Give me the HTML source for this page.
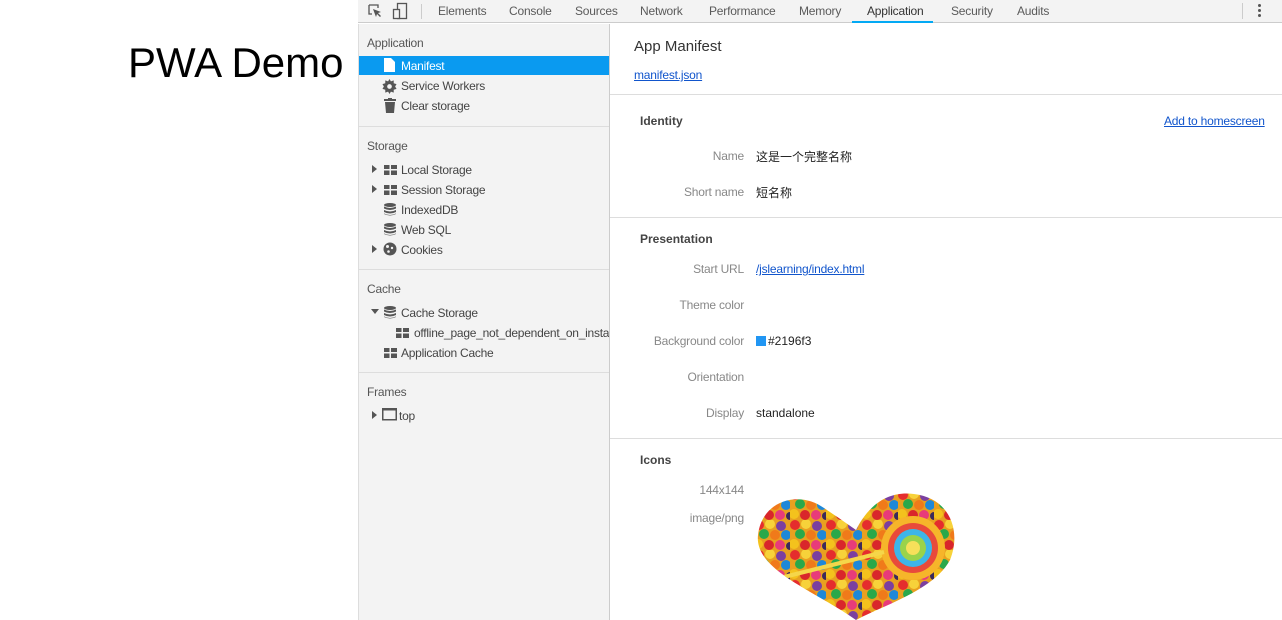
<!DOCTYPE html>
<html><head><meta charset="utf-8"><style>
*{margin:0;padding:0;box-sizing:border-box}
body{width:1282px;height:620px;overflow:hidden;background:#fff;font-family:"Liberation Sans","Noto Sans CJK SC",sans-serif;font-size:12px;color:#333;position:relative}
.a{position:absolute;white-space:nowrap}
.tb{position:absolute;left:358px;top:0;width:924px;height:23px;background:#f3f3f3;border-bottom:1px solid #ccc}
.tab{position:absolute;top:4px;color:#5a5a5a;font-size:12px;letter-spacing:-0.2px}
.side{position:absolute;left:358px;top:24px;width:252px;height:596px;background:#f3f3f3;border-right:1px solid #ccc;border-left:1px solid #ddd;overflow:hidden}
.sh{position:absolute;left:8px;color:#555;font-size:12px;letter-spacing:-0.2px}
.it{position:absolute;left:42px;color:#444;font-size:12px;letter-spacing:-0.25px;white-space:nowrap}
.hr{position:absolute;height:1px;background:#ddd}
.lab{position:absolute;right:538px;color:#888;font-size:12px;text-align:right;letter-spacing:-0.2px}
.val{position:absolute;left:756px;color:#222;font-size:12px}
.hd{position:absolute;left:640px;font-weight:bold;color:#444;font-size:12px}
a{color:#1155cc;text-decoration:underline}
.ic{position:absolute;left:25px}
.tri{position:absolute;left:13px;width:0;height:0;border-top:4px solid transparent;border-bottom:4px solid transparent;border-left:5px solid #555}
</style></head><body>
<div class="a" style="left:128px;top:39px;font-size:42px;color:#000">PWA Demo</div>

<div class="tb">
<svg class="a" style="left:9px;top:3px" width="16" height="16" viewBox="0 0 16 16"><path d="M2 2h9v3M2 2v9h3" fill="none" stroke="#555" stroke-width="1.3"/><path d="M6 6l8 3-3 1 3 3-1 1-3-3-1 3z" fill="#555"/></svg>
<svg class="a" style="left:34px;top:2px" width="16" height="18" viewBox="0 0 16 18"><rect x="5.5" y="1.5" width="9" height="15" fill="none" stroke="#555" stroke-width="1.3"/><rect x="1.5" y="7.5" width="6" height="9" fill="#f3f3f3" stroke="#555" stroke-width="1.3"/></svg>
<div class="a" style="left:63px;top:4px;width:1px;height:15px;background:#ccc"></div>
<div class="tab" style="left:80px">Elements</div>
<div class="tab" style="left:151px">Console</div>
<div class="tab" style="left:217px">Sources</div>
<div class="tab" style="left:282px">Network</div>
<div class="tab" style="left:351px">Performance</div>
<div class="tab" style="left:441px">Memory</div>
<div class="tab" style="left:509px;color:#333">Application</div>
<div class="a" style="left:494px;top:21px;width:81px;height:2px;background:#03a9f4"></div>
<div class="tab" style="left:593px">Security</div>
<div class="tab" style="left:659px">Audits</div>
<div class="a" style="left:884px;top:3px;width:1px;height:16px;background:#ccc"></div>
<div class="a" style="left:900px;top:4px;width:3px;height:3px;background:#555;border-radius:2px;box-shadow:0 5px 0 #555,0 10px 0 #555"></div>
</div>

<div class="side">
<div class="sh" style="top:12px">Application</div>
<div class="a" style="left:0;top:32px;width:251px;height:19px;background:#0a9af0"></div>
<svg class="ic" style="top:34px" width="11" height="14" viewBox="0 0 11 14"><path d="M0 0h7l4 4v10H0z" fill="#fff"/></svg>
<div class="it" style="top:35px;color:#fff">Manifest</div>
<svg class="ic" style="top:55px;left:23px" width="15" height="15" viewBox="0 0 16 16"><path d="M8 0l1.5 2.5 3-1 0 3 3 1-1.5 2.5 1.5 2.5-3 1 0 3-3-1L8 16l-1.5-2.5-3 1 0-3-3-1L2 8 .5 5.5l3-1 0-3 3 1z" fill="#555"/><circle cx="8" cy="8" r="2.5" fill="#f3f3f3"/></svg>
<div class="it" style="top:55px">Service Workers</div>
<svg class="ic" style="top:74px" width="12" height="15" viewBox="0 0 12 15"><rect x="0" y="1" width="12" height="2" fill="#555"/><rect x="4" y="0" width="4" height="2" fill="#555"/><path d="M1 4h10l-1 11H2z" fill="#555"/></svg>
<div class="it" style="top:75px">Clear storage</div>
<div class="hr" style="left:0;top:102px;width:251px"></div>

<div class="sh" style="top:115px">Storage</div>
<div class="tri" style="top:141px"></div>
<svg class="ic" style="top:141px" width="13" height="10"><path d="M0 0h5.5v4H0zM7 0h6v4H7zM0 5.5h5.5V10H0zM7 5.5h6V10H7z" fill="#555"/></svg>
<div class="it" style="top:139px">Local Storage</div>
<div class="tri" style="top:161px"></div>
<svg class="ic" style="top:161px" width="13" height="10"><path d="M0 0h5.5v4H0zM7 0h6v4H7zM0 5.5h5.5V10H0zM7 5.5h6V10H7z" fill="#555"/></svg>
<div class="it" style="top:159px">Session Storage</div>
<svg class="ic" style="top:179px" width="12" height="13" viewBox="0 0 12 13"><ellipse cx="6" cy="2" rx="6" ry="2" fill="#555"/><path d="M0 3.5q6 3 12 0v2q-6 3-12 0zM0 7q6 3 12 0v2q-6 3-12 0zM0 10.5q6 3 12 0V11q-6 3-12 0z" fill="#555"/></svg>
<div class="it" style="top:179px">IndexedDB</div>
<svg class="ic" style="top:199px" width="12" height="13" viewBox="0 0 12 13"><ellipse cx="6" cy="2" rx="6" ry="2" fill="#555"/><path d="M0 3.5q6 3 12 0v2q-6 3-12 0zM0 7q6 3 12 0v2q-6 3-12 0zM0 10.5q6 3 12 0V11q-6 3-12 0z" fill="#555"/></svg>
<div class="it" style="top:199px">Web SQL</div>
<div class="tri" style="top:221px"></div>
<svg class="ic" style="top:218px;left:24px" width="14" height="14" viewBox="0 0 14 14"><circle cx="7" cy="7" r="6.5" fill="#555"/><circle cx="4.5" cy="4.5" r="1.5" fill="#f3f3f3"/><circle cx="9" cy="6" r="1.2" fill="#f3f3f3"/><circle cx="5.5" cy="9.5" r="1.3" fill="#f3f3f3"/></svg>
<div class="it" style="top:219px">Cookies</div>
<div class="hr" style="left:0;top:245px;width:251px"></div>

<div class="sh" style="top:258px">Cache</div>
<div class="a" style="left:12px;top:285px;width:0;height:0;border-left:4px solid transparent;border-right:4px solid transparent;border-top:5px solid #555"></div>
<svg class="ic" style="top:282px" width="12" height="13" viewBox="0 0 12 13"><ellipse cx="6" cy="2" rx="6" ry="2" fill="#555"/><path d="M0 3.5q6 3 12 0v2q-6 3-12 0zM0 7q6 3 12 0v2q-6 3-12 0zM0 10.5q6 3 12 0V11q-6 3-12 0z" fill="#555"/></svg>
<div class="it" style="top:282px">Cache Storage</div>
<svg class="a" style="left:37px;top:304px" width="13" height="10"><path d="M0 0h5.5v4H0zM7 0h6v4H7zM0 5.5h5.5V10H0zM7 5.5h6V10H7z" fill="#555"/></svg>
<div class="it" style="top:302px;left:55px">offline_page_not_dependent_on_insta</div>
<svg class="ic" style="top:324px" width="13" height="10"><path d="M0 0h5.5v4H0zM7 0h6v4H7zM0 5.5h5.5V10H0zM7 5.5h6V10H7z" fill="#555"/></svg>
<div class="it" style="top:322px">Application Cache</div>
<div class="hr" style="left:0;top:348px;width:251px"></div>

<div class="sh" style="top:361px">Frames</div>
<div class="tri" style="top:387px"></div>
<svg class="a" style="left:23px;top:384px" width="15" height="13"><rect x=".75" y=".75" width="13.5" height="11" fill="none" stroke="#555" stroke-width="1.5"/><rect x="0" y="0" width="15" height="2.5" fill="#555"/></svg>
<div class="it" style="top:385px;left:40px">top</div>
</div>

<div class="a" style="left:634px;top:38px;font-size:15px;color:#333">App Manifest</div>
<div class="a" style="left:634px;top:68px;letter-spacing:-0.2px"><a>manifest.json</a></div>
<div class="hr" style="left:610px;top:94px;width:672px"></div>

<div class="hd" style="top:114px">Identity</div>
<div class="a" style="left:1164px;top:114px;letter-spacing:-0.2px"><a>Add to homescreen</a></div>
<div class="lab" style="top:149px">Name</div><div class="val" style="top:148px">这是一个完整名称</div>
<div class="lab" style="top:185px">Short name</div><div class="val" style="top:184px">短名称</div>
<div class="hr" style="left:610px;top:217px;width:672px"></div>

<div class="hd" style="top:232px">Presentation</div>
<div class="lab" style="top:262px">Start URL</div><div class="val" style="top:262px;letter-spacing:-0.2px"><a>/jslearning/index.html</a></div>
<div class="lab" style="top:298px">Theme color</div>
<div class="lab" style="top:334px">Background color</div><div class="val" style="top:334px"><span style="display:inline-block;width:10px;height:10px;background:#2196f3;vertical-align:-1px;margin-right:2px"></span>#2196f3</div>
<div class="lab" style="top:370px">Orientation</div>
<div class="lab" style="top:406px">Display</div><div class="val" style="top:406px">standalone</div>
<div class="hr" style="left:610px;top:438px;width:672px"></div>

<div class="hd" style="top:453px">Icons</div>
<div class="lab" style="top:483px">144x144</div>
<div class="lab" style="top:511px">image/png</div>

<svg class="a" style="left:754px;top:490px" width="204" height="130" viewBox="0 0 204 130">
<defs>
<pattern id="p" width="36" height="30" patternUnits="userSpaceOnUse">
<rect width="36" height="30" fill="#e8a020"/>
<circle cx="5" cy="5" r="5" fill="#e52d2d"/><circle cx="16" cy="4" r="5" fill="#f7d23a"/><circle cx="27" cy="6" r="5" fill="#7b3fa0"/>
<circle cx="10" cy="14" r="5" fill="#2aa84a"/><circle cx="21" cy="15" r="5" fill="#f07a1a"/><circle cx="32" cy="15" r="5" fill="#1e88d8"/>
<circle cx="4" cy="24" r="5" fill="#f3c21d"/><circle cx="15" cy="25" r="5" fill="#d9262b"/><circle cx="26" cy="25" r="5" fill="#e83b7a"/>
<circle cx="36" cy="26" r="4" fill="#3b2a5a"/>
</pattern>
<clipPath id="h"><path d="M102 130C60 100 0 80 4 45 8 10 45 0 70 18 85 28 95 35 102 40 112 20 130 0 160 4 195 8 208 40 196 70 180 100 130 115 102 130z"/></clipPath>
</defs>
<g clip-path="url(#h)"><rect width="204" height="130" fill="url(#p)"/>
<circle cx="159" cy="58" r="32" fill="#f6b52a"/>
<circle cx="159" cy="58" r="25" fill="#e84a3b"/>
<circle cx="159" cy="58" r="19" fill="#3db5e8"/>
<circle cx="159" cy="58" r="13" fill="#9ad34a"/>
<circle cx="159" cy="58" r="7" fill="#f7e05a"/>
<path d="M10 92L130 62" stroke="#f5d64a" stroke-width="4"/>
</g>
</svg>
</body></html>
